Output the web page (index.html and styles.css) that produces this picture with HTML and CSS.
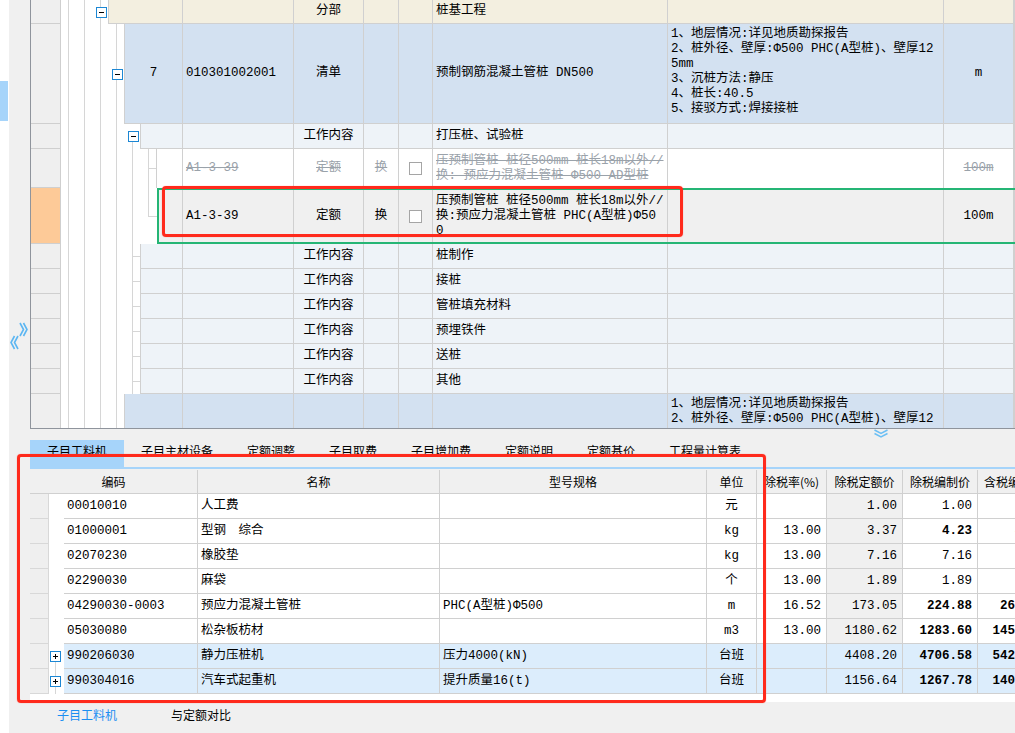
FILE: index.html
```html
<!DOCTYPE html>
<html lang="zh-CN">
<head>
<meta charset="utf-8">
<title>子目工料机</title>
<link rel="stylesheet" href="styles.css">
</head>
<body>
<div class="app">
  <div class="rail"><div class="rail-mark"></div></div>
  <div class="side">
    <svg class="side-arrows" width="18" height="28" viewBox="0 0 18 28" fill="none" stroke="#5cb6f2" stroke-width="1.6">
      <polyline points="10,1 13.5,7.5 10,14"/>
      <polyline points="13.5,1 17,7.5 13.5,14"/>
      <polyline points="8,14 4.5,20.5 8,27"/>
      <polyline points="4.5,14 1,20.5 4.5,27"/>
    </svg>
  </div>
  <div class="main">
    <section class="gtop g">
      <div class="row h24 fb">
        <div class="rh"></div>
        <div class="ind t-fb"><span class="exp"></span></div>
        <div class="c seq w75"></div>
        <div class="c bm"></div>
        <div class="c lb">分部</div>
        <div class="c hz"></div>
        <div class="c ck"></div>
        <div class="c mc">桩基工程</div>
        <div class="c tz"></div>
        <div class="c dw"></div>
        <div class="c ex"></div>
      </div>
      <div class="row h100 qd">
        <div class="rh"></div>
        <div class="ind t-qd"><span class="exp"></span></div>
        <div class="c seq w59">7</div>
        <div class="c bm">010301002001</div>
        <div class="c lb">清单</div>
        <div class="c hz"></div>
        <div class="c ck"></div>
        <div class="c mc">预制钢筋混凝土管桩 DN500</div>
        <div class="c tz"><div>1、地层情况:详见地质勘探报告<br>2、桩外径、壁厚:Φ500 PHC(A型桩)、壁厚12<br>5mm<br>3、沉桩方法:静压<br>4、桩长:40.5<br>5、接驳方式:焊接接桩</div></div>
        <div class="c dw">m</div>
        <div class="c ex"></div>
      </div>
      <div class="row h25 gz">
        <div class="rh"></div>
        <div class="ind t-gz0"><span class="exp"></span></div>
        <div class="c seq w43"></div>
        <div class="c bm"></div>
        <div class="c lb">工作内容</div>
        <div class="c hz"></div>
        <div class="c ck"></div>
        <div class="c mc">打压桩、试验桩</div>
        <div class="c tz"></div>
        <div class="c dw"></div>
        <div class="c ex"></div>
      </div>
      <div class="row h39 de strike">
        <div class="rh"></div>
        <div class="ind t-de1"></div>
        <div class="c seq w27"></div>
        <div class="c bm">A1-3-39</div>
        <div class="c lb">定额</div>
        <div class="c hz">换</div>
        <div class="c ck"><span class="cb"></span></div>
        <div class="c mc"><div>压预制管桩 桩径500mm 桩长18m以外//<br>换: 预应力混凝土管桩 Φ500 AD型桩</div></div>
        <div class="c tz"></div>
        <div class="c dw">100m</div>
        <div class="c ex"></div>
      </div>
      <div class="row h56">
        <div class="rh cur"></div>
        <div class="ind t-de2"></div>
        <div class="sel">
          <div class="c seq w24"></div>
          <div class="c bm">A1-3-39</div>
          <div class="c lb">定额</div>
          <div class="c hz">换</div>
          <div class="c ck"><span class="cb"></span></div>
          <div class="c mc"><div>压预制管桩 桩径500mm 桩长18m以外//<br>换:预应力混凝土管桩 PHC(A型桩)Φ50<br>0</div></div>
          <div class="c tz"></div>
          <div class="c dw">100m</div>
          <div class="c ex"></div>
        </div>
      </div>
      <div class="row h25 gz">
        <div class="rh"></div>
        <div class="ind t-gz"></div>
        <div class="c seq w43"></div>
        <div class="c bm"></div>
        <div class="c lb">工作内容</div>
        <div class="c hz"></div>
        <div class="c ck"></div>
        <div class="c mc">桩制作</div>
        <div class="c tz"></div>
        <div class="c dw"></div>
        <div class="c ex"></div>
      </div>
      <div class="row h25 gz">
        <div class="rh"></div>
        <div class="ind t-gz"></div>
        <div class="c seq w43"></div>
        <div class="c bm"></div>
        <div class="c lb">工作内容</div>
        <div class="c hz"></div>
        <div class="c ck"></div>
        <div class="c mc">接桩</div>
        <div class="c tz"></div>
        <div class="c dw"></div>
        <div class="c ex"></div>
      </div>
      <div class="row h25 gz">
        <div class="rh"></div>
        <div class="ind t-gz"></div>
        <div class="c seq w43"></div>
        <div class="c bm"></div>
        <div class="c lb">工作内容</div>
        <div class="c hz"></div>
        <div class="c ck"></div>
        <div class="c mc">管桩填充材料</div>
        <div class="c tz"></div>
        <div class="c dw"></div>
        <div class="c ex"></div>
      </div>
      <div class="row h25 gz">
        <div class="rh"></div>
        <div class="ind t-gz"></div>
        <div class="c seq w43"></div>
        <div class="c bm"></div>
        <div class="c lb">工作内容</div>
        <div class="c hz"></div>
        <div class="c ck"></div>
        <div class="c mc">预埋铁件</div>
        <div class="c tz"></div>
        <div class="c dw"></div>
        <div class="c ex"></div>
      </div>
      <div class="row h25 gz">
        <div class="rh"></div>
        <div class="ind t-gz"></div>
        <div class="c seq w43"></div>
        <div class="c bm"></div>
        <div class="c lb">工作内容</div>
        <div class="c hz"></div>
        <div class="c ck"></div>
        <div class="c mc">送桩</div>
        <div class="c tz"></div>
        <div class="c dw"></div>
        <div class="c ex"></div>
      </div>
      <div class="row h25 gz">
        <div class="rh"></div>
        <div class="ind t-gz"></div>
        <div class="c seq w43"></div>
        <div class="c bm"></div>
        <div class="c lb">工作内容</div>
        <div class="c hz"></div>
        <div class="c ck"></div>
        <div class="c mc">其他</div>
        <div class="c tz"></div>
        <div class="c dw"></div>
        <div class="c ex"></div>
      </div>
      <div class="row h100 qd">
        <div class="rh"></div>
        <div class="ind t-qd"><span class="exp"></span></div>
        <div class="c seq w59">8</div>
        <div class="c bm">010301002002</div>
        <div class="c lb">清单</div>
        <div class="c hz"></div>
        <div class="c ck"></div>
        <div class="c mc">预制钢筋混凝土管桩 DN500</div>
        <div class="c tz"><div>1、地层情况:详见地质勘探报告<br>2、桩外径、壁厚:Φ500 PHC(A型桩)、壁厚12<br>5mm<br>3、沉桩方法:静压<br>4、桩长:40.5<br>5、接驳方式:焊接接桩</div></div>
        <div class="c dw">m</div>
        <div class="c ex"></div>
      </div>
    </section>

    <div class="splitter">
      <svg class="down" width="16" height="9" viewBox="0 0 16 9" fill="none" stroke="#6cbff4" stroke-width="1.5">
        <polyline points="1.5,1 8,4.5 14.5,1"/>
        <polyline points="1.5,4.5 8,8 14.5,4.5"/>
      </svg>
    </div>

    <nav class="tabs">
      <span class="tab on">子目工料机</span>
      <span class="tab">子目主材设备</span>
      <span class="tab">定额调整</span>
      <span class="tab">子目取费</span>
      <span class="tab">子目增加费</span>
      <span class="tab">定额说明</span>
      <span class="tab">定额基价</span>
      <span class="tab">工程量计算表</span>
    </nav>

    <section class="gbot">
      <div class="brow bhead">
        <div class="hc w-first">编码</div>
        <div class="hc w-mc">名称</div>
        <div class="hc w-gg">型号规格</div>
        <div class="hc w-dw">单位</div>
        <div class="hc w-sl">除税率(%)</div>
        <div class="hc w-de">除税定额价</div>
        <div class="hc w-bz">除税编制价</div>
        <div class="hc w-hs">含税编制价</div>
      </div>
      <div class="brow g">
        <div class="brh"></div><div class="btr"></div>
        <div class="d w-bm">00010010</div>
        <div class="d w-mc">人工费</div>
        <div class="d w-gg"></div>
        <div class="d w-dw ctr">元</div>
        <div class="d w-sl num"></div>
        <div class="d w-de num gray">1.00</div>
        <div class="d w-bz num">1.00</div>
        <div class="d w-hs num">1.00</div>
      </div>
      <div class="brow g">
        <div class="brh"></div><div class="btr"></div>
        <div class="d w-bm">01000001</div>
        <div class="d w-mc">型钢　综合</div>
        <div class="d w-gg"></div>
        <div class="d w-dw ctr">kg</div>
        <div class="d w-sl num">13.00</div>
        <div class="d w-de num gray">3.37</div>
        <div class="d w-bz num"><b>4.23</b></div>
        <div class="d w-hs num"><b>4.78</b></div>
      </div>
      <div class="brow g">
        <div class="brh"></div><div class="btr"></div>
        <div class="d w-bm">02070230</div>
        <div class="d w-mc">橡胶垫</div>
        <div class="d w-gg"></div>
        <div class="d w-dw ctr">kg</div>
        <div class="d w-sl num">13.00</div>
        <div class="d w-de num gray">7.16</div>
        <div class="d w-bz num">7.16</div>
        <div class="d w-hs num">8.09</div>
      </div>
      <div class="brow g">
        <div class="brh"></div><div class="btr"></div>
        <div class="d w-bm">02290030</div>
        <div class="d w-mc">麻袋</div>
        <div class="d w-gg"></div>
        <div class="d w-dw ctr">个</div>
        <div class="d w-sl num">13.00</div>
        <div class="d w-de num gray">1.89</div>
        <div class="d w-bz num">1.89</div>
        <div class="d w-hs num">2.14</div>
      </div>
      <div class="brow g">
        <div class="brh"></div><div class="btr"></div>
        <div class="d w-bm">04290030-0003</div>
        <div class="d w-mc">预应力混凝土管桩</div>
        <div class="d w-gg">PHC(A型桩)Φ500</div>
        <div class="d w-dw ctr">m</div>
        <div class="d w-sl num">16.52</div>
        <div class="d w-de num gray">173.05</div>
        <div class="d w-bz num"><b>224.88</b></div>
        <div class="d w-hs num"><b>262.03</b></div>
      </div>
      <div class="brow g">
        <div class="brh"></div><div class="btr"></div>
        <div class="d w-bm">05030080</div>
        <div class="d w-mc">松杂板枋材</div>
        <div class="d w-gg"></div>
        <div class="d w-dw ctr">m3</div>
        <div class="d w-sl num">13.00</div>
        <div class="d w-de num gray">1180.62</div>
        <div class="d w-bz num"><b>1283.60</b></div>
        <div class="d w-hs num"><b>1450.47</b></div>
      </div>
      <div class="brow g mach">
        <div class="brh"></div><div class="btr tl-first"><span class="exp plus"></span></div>
        <div class="d w-bm">990206030</div>
        <div class="d w-mc">静力压桩机</div>
        <div class="d w-gg">压力4000(kN)</div>
        <div class="d w-dw ctr">台班</div>
        <div class="d w-sl num"></div>
        <div class="d w-de num">4408.20</div>
        <div class="d w-bz num"><b>4706.58</b></div>
        <div class="d w-hs num"><b>5422.38</b></div>
      </div>
      <div class="brow g mach">
        <div class="brh"></div><div class="btr tl"><span class="exp plus"></span></div>
        <div class="d w-bm">990304016</div>
        <div class="d w-mc">汽车式起重机</div>
        <div class="d w-gg">提升质量16(t)</div>
        <div class="d w-dw ctr">台班</div>
        <div class="d w-sl num"></div>
        <div class="d w-de num">1156.64</div>
        <div class="d w-bz num"><b>1267.78</b></div>
        <div class="d w-hs num"><b>1400.90</b></div>
      </div>
    </section>

    <nav class="subtabs">
      <span class="subtab on">子目工料机</span>
      <span class="subtab">与定额对比</span>
    </nav>
  </div>

  <div class="mark mark-a"></div>
  <div class="mark mark-b"></div>
</div>
</body>
</html>
```
FILE: styles.css
```css
:root {
  --v: linear-gradient(#d6d6d6, #d6d6d6);
  --ln: #d0d0d0;
}
* { box-sizing: border-box; }
html, body { margin: 0; padding: 0; }
body {
  background: #f0f0f0;
  font-family: "Noto Sans CJK SC", "Noto Sans", sans-serif;
  font-size: 12px;
  color: #000;
}
.app {
  position: relative;
  display: flex;
  width: 1015px;
  height: 733px;
  overflow: hidden;
  background: #f0f0f0;
}
.rail { flex: none; width: 9px; background: #fff; padding-top: 81px; }
.rail-mark { width: 8px; height: 40px; background: #a6d4fa; }
.side { flex: none; width: 21px; padding-top: 322px; padding-left: 1px; }
.side-arrows { display: block; }
.main {
  flex: 1;
  min-width: 0;
  display: flex;
  flex-direction: column;
  overflow: hidden;
}

.g {
  font-family: "Liberation Mono", "Noto Sans CJK SC", monospace;
  font-size: 12.5px;
  line-height: 15px;
}

/* ---------- upper grid ---------- */
.gtop {
  flex: none;
  height: 429px;
  overflow: hidden;
  background: #fff;
  border-left: 1px solid #8f949c;
  border-bottom: 1px solid #8f949c;
}
.row { display: flex; }
.h24 { height: 24px; }
.h25 { height: 25px; }
.h39 { height: 39px; }
.h56 { height: 56px; }
.h100 { height: 100px; }

.rh {
  flex: none;
  width: 30px;
  background: #efefef;
  border-right: 1px solid #cfcfcf;
  border-bottom: 1px solid #cfcfcf;
}
.rh.cur { background: #fdca98; }

.ind {
  flex: none;
  display: flex;
  align-items: center;
  justify-content: flex-end;
  padding-right: 1px;
  background-repeat: no-repeat;
}
.t-fb {
  width: 47px;
  background: var(--v) 7px 0/1px 100% no-repeat, var(--v) 23px 0/1px 100% no-repeat,
              var(--v) 39px 0/1px 100% no-repeat;
}
.t-qd {
  width: 63px;
  background: var(--v) 7px 0/1px 100% no-repeat, var(--v) 23px 0/1px 100% no-repeat,
              var(--v) 39px 0/1px 100% no-repeat, var(--v) 55px 0/1px 100% no-repeat;
}
.t-gz0 {
  width: 79px;
  background: var(--v) 7px 0/1px 100% no-repeat, var(--v) 23px 0/1px 100% no-repeat,
              var(--v) 39px 0/1px 100% no-repeat, var(--v) 55px 0/1px 100% no-repeat,
              var(--v) 71px 18px/1px 100% no-repeat;
}
.t-gz {
  width: 79px;
  background: var(--v) 7px 0/1px 100% no-repeat, var(--v) 23px 0/1px 100% no-repeat,
              var(--v) 39px 0/1px 100% no-repeat, var(--v) 55px 0/1px 100% no-repeat,
              var(--v) 71px 0/1px 100% no-repeat, var(--v) 71px 50%/8px 1px no-repeat;
}
.t-de1 {
  width: 95px;
  background: var(--v) 7px 0/1px 100% no-repeat, var(--v) 23px 0/1px 100% no-repeat,
              var(--v) 39px 0/1px 100% no-repeat, var(--v) 55px 0/1px 100% no-repeat,
              var(--v) 71px 0/1px 100% no-repeat, var(--v) 87px 0/1px 100% no-repeat,
              var(--v) 87px 50%/8px 1px no-repeat;
}
.t-de2 {
  width: 96px;
  background: var(--v) 7px 0/1px 100% no-repeat, var(--v) 23px 0/1px 100% no-repeat,
              var(--v) 39px 0/1px 100% no-repeat, var(--v) 55px 0/1px 100% no-repeat,
              var(--v) 71px 0/1px 100% no-repeat, var(--v) 87px 0/1px 50% no-repeat,
              var(--v) 87px 50%/9px 1px no-repeat;
}

.exp {
  flex: none;
  display: block;
  width: 11px;
  height: 11px;
  border: 1px solid #1c87d4;
  background: linear-gradient(#000, #000) center/5px 1px no-repeat, #fff;
}
.exp.plus {
  background: linear-gradient(#000, #000) center/5px 1px no-repeat,
              linear-gradient(#000, #000) center/1px 5px no-repeat, #fff;
}

.c {
  flex: none;
  display: flex;
  align-items: center;
  padding: 0 3px;
  border-right: 1px solid var(--ln);
  border-bottom: 1px solid var(--ln);
  white-space: nowrap;
  overflow: hidden;
}
.seq { border-left: 1px solid var(--ln); justify-content: center; }
.w75 { width: 75px; }
.w59 { width: 59px; }
.w43 { width: 43px; }
.w27 { width: 27px; }
.w24 { width: 24px; }
.bm { width: 111px; }
.lb { width: 70px; justify-content: center; }
.hz { width: 35px; justify-content: center; }
.ck { width: 34px; justify-content: center; }
.mc { width: 235px; }
.tz { width: 276px; padding-bottom: 4px; }
.dw { width: 70px; justify-content: center; }
.ex { flex: 1; min-width: 0; padding: 0; }

.fb .c { background: #f3efe0; }
.qd .c { background: #d3e1f1; }
.gz .c { background: #eef3f8; }
.de .c { background: #fff; }
.strike .c {
  color: #9aa2aa;
  text-decoration: line-through;
  border-bottom: 0;
}

.sel {
  flex: 1;
  min-width: 0;
  display: flex;
  border: 2px solid #25b575;
  border-right: 0;
  background: #f0f0f0;
}
.sel .c { border-bottom: 0; }
.sel .seq { border-left: 0; }

.cb {
  display: block;
  width: 13px;
  height: 13px;
  border: 1px solid #a5a5a5;
  background: #fff;
}

/* ---------- splitter + tabs ---------- */
.splitter { flex: none; height: 11px; padding-left: 843px; }
.down { display: block; }

.tabs {
  flex: none;
  display: flex;
  height: 29px;
  border-bottom: 2px solid #a6d4fa;
  margin-bottom: 1px;
}
.tab {
  padding: 0 17px;
  line-height: 22px;
  white-space: nowrap;
}
.tab.on { background: #a6d4fa; }

/* ---------- lower grid ---------- */
.gbot {
  flex: none;
  height: 232px;
  background: #fff;
  overflow: hidden;
}
.brow { display: flex; height: 25px; }
.bhead { height: 24px; }
.hc {
  flex: none;
  display: flex;
  align-items: center;
  justify-content: center;
  background: #f0f0f0;
  border-right: 1px solid var(--ln);
  border-bottom: 1px solid var(--ln);
  white-space: nowrap;
  overflow: hidden;
}
.w-first { width: 168px; }
.w-bm { width: 134px; }
.w-mc { width: 242px; }
.w-gg { width: 267px; }
.w-dw { width: 50px; }
.w-sl { width: 70px; }
.w-de { width: 76px; }
.w-bz { width: 75px; }
.w-hs { width: 73px; }

.brh {
  flex: none;
  width: 19px;
  background: #efefef;
  border-right: 1px solid #d8d8d8;
  border-bottom: 1px solid #d8d8d8;
}
.btr {
  flex: none;
  width: 15px;
  display: flex;
  align-items: center;
  padding-left: 1px;
}
.btr.tl-first { background: var(--v) 6px 12px/1px 100% no-repeat; }
.btr.tl { background: var(--v) 6px 0/1px 100% no-repeat; }

.d {
  flex: none;
  display: flex;
  align-items: center;
  padding: 0 3px;
  border-right: 1px solid var(--ln);
  border-bottom: 1px solid var(--ln);
  white-space: nowrap;
  overflow: hidden;
}
.num { justify-content: flex-end; padding-right: 5px; }
.ctr { justify-content: center; }
.gray { background: #f0f0f0; }
.mach .d { background: #dcedfc; }
.d b { font-weight: bold; }

/* ---------- bottom sub tabs ---------- */
.subtabs {
  flex: none;
  display: flex;
  gap: 54px;
  padding: 3px 0 0 27px;
}
.subtab { line-height: 20px; white-space: nowrap; }
.subtab.on { color: #1b8ef2; }

/* ---------- red annotation boxes ---------- */
.mark {
  position: absolute;
  border: 3px solid #ff2a1c;
  border-radius: 4px;
  box-shadow: 0 0 1px rgba(255, 40, 30, 0.6);
  pointer-events: none;
}
.mark-a { left: 162px; top: 186px; width: 521px; height: 51px; }
.mark-b { left: 17px; top: 454px; width: 749px; height: 249px; }
```
